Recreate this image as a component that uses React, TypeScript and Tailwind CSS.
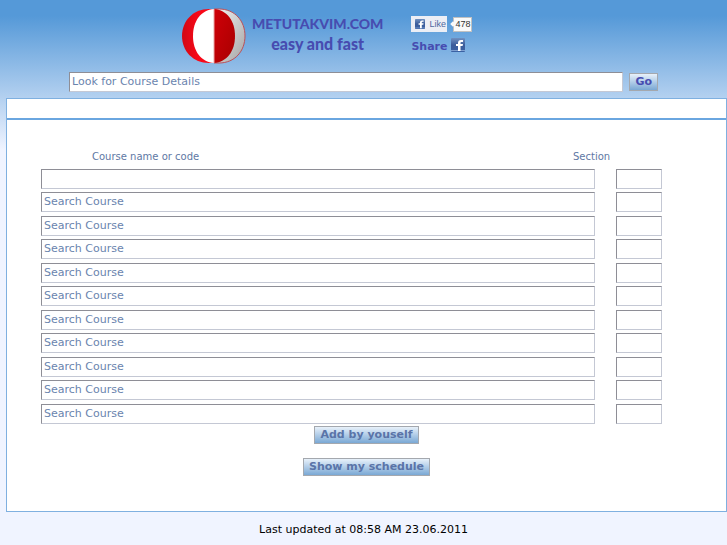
import React from "react";

const courses = ["", ...Array(10).fill("Search Course")];

const fieldStyle =
  "block h-5 w-full border border-t-[#8e8e96] border-l-[#8e8e96] border-r-[#c4c8d4] border-b-[#c4c8d4] bg-white px-0.5 pb-0.5 text-[#6a84ae] outline-none";

const buttonStyle =
  "border border-[#a4a8ae] bg-linear-to-b from-[#e8f1fa] to-[#7aa8d4] font-bold leading-4";

const Logo = () => {
  return (
    <svg viewBox="0 0 64 56" className="h-14 w-16 shrink-0" aria-label="METU logo">
      <defs>
        <linearGradient id="silver" x1="0" x2="1" y1="0" y2="1">
          <stop offset="0" stopColor="#f4f4f4" />
          <stop offset="1" stopColor="#a4a4a4" />
        </linearGradient>
        <linearGradient id="red" x1="0" x2="1" y1="0" y2="1">
          <stop offset="0" stopColor="#d00008" />
          <stop offset="1" stopColor="#a80000" />
        </linearGradient>
        <linearGradient id="left" x1="0" x2="1">
          <stop offset="0" stopColor="#d00814" />
          <stop offset="0.5" stopColor="#f80818" />
        </linearGradient>
      </defs>
      <path d="M32 1H27C11 1 0 13 0 28s11 27 27 27h5z" fill="url(#left)" />
      <path d="M32 1h5c16 0 26 12 26 27S53 55 37 55h-5z" fill="url(#silver)" stroke="#bc5058" />
      <path d="M32 1C19 2 11 13 11 28s8 26 21 27z" fill="#fff" />
      <path d="M32 1c13 1 21 12 21 27s-8 26-21 27z" fill="url(#red)" />
      <path d="M32 1v54" stroke="#e8a8a8" />
    </svg>
  );
};

const FacebookMark = ({ className }: { className: string }) => {
  return (
    <svg viewBox="0 0 14 14" className={className} aria-hidden="true">
      <defs>
        <linearGradient id="fb" x1="0" x2="0" y1="0" y2="1">
          <stop offset="0" stopColor="#7090c0" />
          <stop offset="0.5" stopColor="#3b5c9a" />
          <stop offset="1" stopColor="#3b62a4" />
        </linearGradient>
      </defs>
      <rect width="14" height="14" rx="1" fill="url(#fb)" />
      <path d="M0 12h14v1H0z" fill="#7f9fd0" />
      <path d="M7 13V8H5V6h2V5c0-2 1-3 3-3h2v2h-1.500C9.700 4 9.500 4.400 9.500 5v1H12l-.4 2H9.500v5z" fill="#fff" />
    </svg>
  );
};

const Header = () => {
  return (
    <header>
      <div className="flex pt-2 pl-[182px]">
        <Logo />
        <div className="ml-1.5 pt-1.5 text-center font-['Lato'] font-black text-[#474cb0]">
          <p className="text-sm leading-5">METUTAKVIM.COM</p>
          <p className="text-base leading-5">easy and fast</p>
        </div>
        <div className="ml-7 pt-2">
          <div className="flex items-center gap-1.5">
            <button className="flex h-4 w-9 items-center gap-1 bg-[#eceef5] pl-1 font-['Liberation_Sans'] text-[9px] text-[#5068a0]">
              <FacebookMark className="size-2.5 shrink-0" />
              Like
            </button>
            <span className="relative h-[15px] border border-[#c1c1c1] bg-[#fafafa] px-px font-['Liberation_Sans'] text-[9px] leading-[13px] text-[#333]">
              <span className="absolute top-1 -left-[3px] size-1 rotate-45 bg-[#fafafa]" />
              478
            </span>
          </div>
          <a href="#share" className="mt-1.5 flex items-center gap-1 font-bold text-[#474cb0]">
            Share
            <FacebookMark className="mb-1 size-3.5" />
          </a>
        </div>
      </div>
      <form className="flex items-center gap-1.5 px-[69px] pt-2 pb-1.5">
        <input className={fieldStyle} aria-label="Course details" defaultValue="Look for Course Details" />
        <button type="button" className={`${buttonStyle} px-[5px] text-[#474cb0]`}>
          Go
        </button>
      </form>
    </header>
  );
};

const CourseTable = () => {
  return (
    <table className="w-full table-fixed">
      <colgroup>
        <col />
        <col className="w-[22px]" />
        <col className="w-[67px]" />
      </colgroup>
      <thead className="text-left text-[10px] leading-4 text-[#6078a4]">
        <tr>
          <th className="pb-1 pl-[51px] font-normal">Course name or code</th>
          <th colSpan={2} className="pb-1 font-normal">
            Section
          </th>
        </tr>
      </thead>
      <tbody>
        {courses.map((course, index) => (
          <tr key={index} className="h-6 odd:h-[23px] last:odd:h-[22px]">
            <td colSpan={2} className="p-0 align-top">
              <input className={fieldStyle} aria-label={`Course ${index + 1}`} defaultValue={course} />
            </td>
            <td className="p-0 pl-[21px] align-top">
              <input className={fieldStyle} aria-label={`Section ${index + 1}`} />
            </td>
          </tr>
        ))}
      </tbody>
    </table>
  );
};

const App = () => {
  return (
    <div className="min-h-screen bg-[#f0f4ff] bg-[linear-gradient(#5599d8_0px,#5599d8_16px,#f0f4ff_150px)] font-['DejaVu_Sans',sans-serif] text-[11px] leading-4">
      <Header />
      <main className="ml-1.5 border border-[#7fb0e0] bg-white">
        <div className="h-[21px] border-b-2 border-[#6aa6e0]" />
        <div className="pt-[29px] pr-16 pl-[34px]">
          <CourseTable />
        </div>
        <div className="flex flex-col items-center gap-3.5 pb-[35px] text-[#5a74a8]">
          <button className={`${buttonStyle} px-[5px]`}>Add by youself</button>
          <button className={`${buttonStyle} px-[5px]`}>Show my schedule</button>
        </div>
      </main>
      <footer className="py-2.5 text-center text-black">Last updated at 08:58 AM 23.06.2011</footer>
    </div>
  );
};

export default App;
